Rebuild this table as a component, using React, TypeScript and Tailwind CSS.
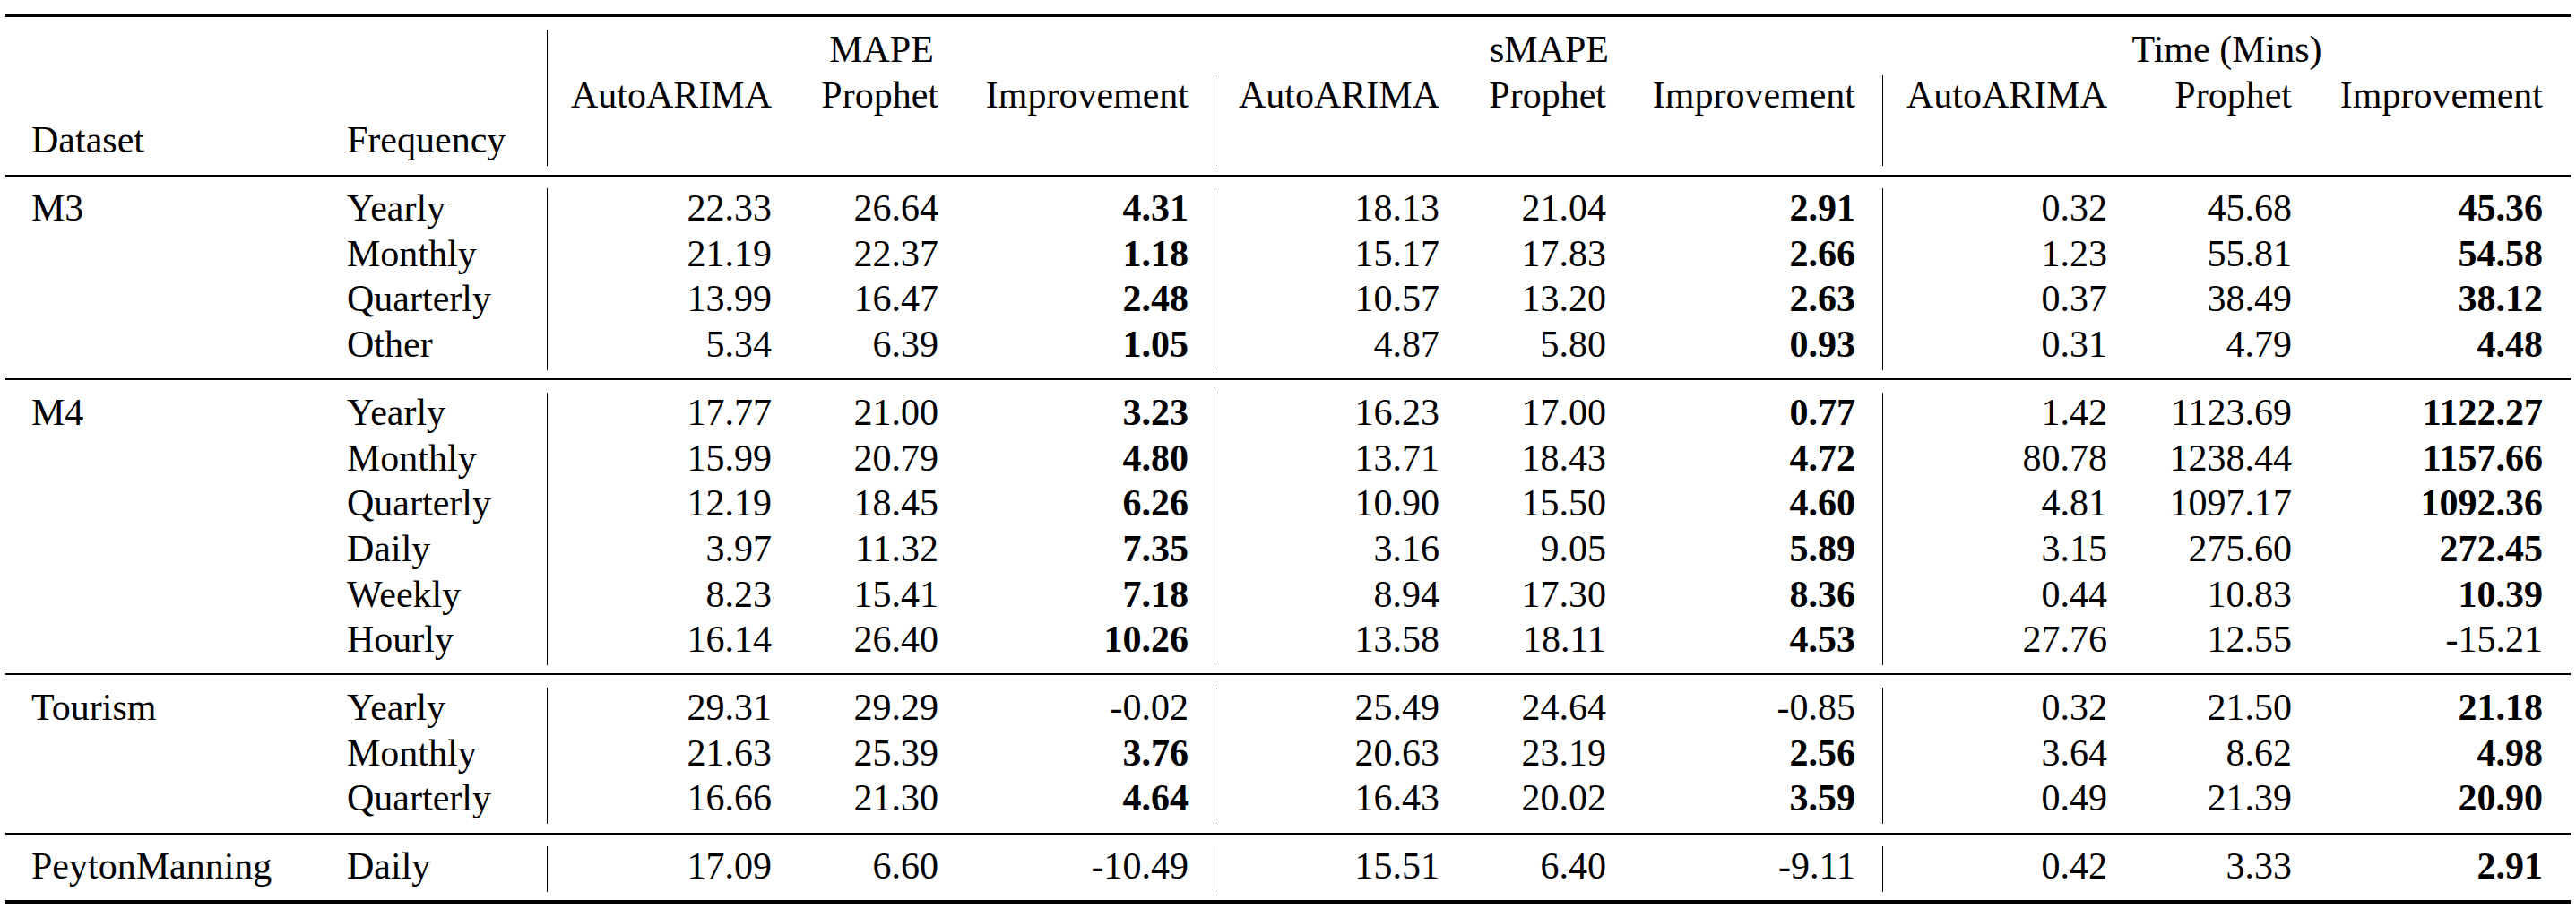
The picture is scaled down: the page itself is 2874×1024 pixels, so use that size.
import React from "react"

const COLS =
  "grid grid-cols-[353px_252px_278px_186px_281px_278px_186px_281px_278px_206px_283px]"

// "*" in front of a value = bold (best result)
const GROUPS: { name: string; rows: string[][] }[] = [
  {
    name: "M3",
    rows: [
      ["Yearly", "22.33", "26.64", "*4.31", "18.13", "21.04", "*2.91", "0.32", "45.68", "*45.36"],
      ["Monthly", "21.19", "22.37", "*1.18", "15.17", "17.83", "*2.66", "1.23", "55.81", "*54.58"],
      ["Quarterly", "13.99", "16.47", "*2.48", "10.57", "13.20", "*2.63", "0.37", "38.49", "*38.12"],
      ["Other", "5.34", "6.39", "*1.05", "4.87", "5.80", "*0.93", "0.31", "4.79", "*4.48"],
    ],
  },
  {
    name: "M4",
    rows: [
      ["Yearly", "17.77", "21.00", "*3.23", "16.23", "17.00", "*0.77", "1.42", "1123.69", "*1122.27"],
      ["Monthly", "15.99", "20.79", "*4.80", "13.71", "18.43", "*4.72", "80.78", "1238.44", "*1157.66"],
      ["Quarterly", "12.19", "18.45", "*6.26", "10.90", "15.50", "*4.60", "4.81", "1097.17", "*1092.36"],
      ["Daily", "3.97", "11.32", "*7.35", "3.16", "9.05", "*5.89", "3.15", "275.60", "*272.45"],
      ["Weekly", "8.23", "15.41", "*7.18", "8.94", "17.30", "*8.36", "0.44", "10.83", "*10.39"],
      ["Hourly", "16.14", "26.40", "*10.26", "13.58", "18.11", "*4.53", "27.76", "12.55", "-15.21"],
    ],
  },
  {
    name: "Tourism",
    rows: [
      ["Yearly", "29.31", "29.29", "-0.02", "25.49", "24.64", "-0.85", "0.32", "21.50", "*21.18"],
      ["Monthly", "21.63", "25.39", "*3.76", "20.63", "23.19", "*2.56", "3.64", "8.62", "*4.98"],
      ["Quarterly", "16.66", "21.30", "*4.64", "16.43", "20.02", "*3.59", "0.49", "21.39", "*20.90"],
    ],
  },
  {
    name: "PeytonManning",
    rows: [["Daily", "17.09", "6.60", "-10.49", "15.51", "6.40", "-9.11", "0.42", "3.33", "*2.91"]],
  },
]

const SUBHEADS = ["AutoARIMA", "Prophet", "Improvement"]

// right padding per numeric column; the Improvement columns carry the vertical rule
const NUM_CELL = [
  "pr-[28px]",
  "pr-[28px]",
  "pr-[29px] border-r border-black",
  "pr-[28px]",
  "pr-[28px]",
  "pr-[30px] border-r border-black",
  "pr-[28px]",
  "pr-[28px]",
  "pr-[31px]",
]

function Rule({ className }: { className: string }) {
  return <div className={`w-[2862px] bg-black ${className}`} />
}

export default function App() {
  return (
    <div className="bg-white text-black pt-[16px] pl-[6px] w-[2874px] h-[1024px] [font-family:'Liberation_Serif','Times_New_Roman',serif] text-[42px] leading-[45.7px]">
      <Rule className="h-[3px]" />

      {/* header */}
      <div className="pt-[14px] pb-[9.5px]">
        <div className={`${COLS} h-[50.7px]`}>
          <div />
          <div className="border-r border-black" />
          <div className="col-span-3 text-center">MAPE</div>
          <div className="col-span-3 text-center">sMAPE</div>
          <div className="col-span-3 text-center">Time (Mins)</div>
        </div>
        <div className={`${COLS} h-[50.7px]`}>
          <div />
          <div className="border-r border-black" />
          {[0, 1, 2, 3, 4, 5, 6, 7, 8].map((i) => (
            <div key={i} className={`text-right ${NUM_CELL[i]}`}>
              {SUBHEADS[i % 3]}
            </div>
          ))}
        </div>
        <div className={`${COLS} h-[50.7px]`}>
          <div className="pl-[29px]">Dataset</div>
          <div className="pl-[28px] border-r border-black">Frequency</div>
          {[0, 1, 2, 3, 4, 5, 6, 7, 8].map((i) => (
            <div key={i} className={NUM_CELL[i]} />
          ))}
        </div>
      </div>

      {GROUPS.map((g) => (
        <div key={g.name}>
          <Rule className="h-[2px]" />
          <div className="pt-[13.5px] pb-[9.5px]">
            {g.rows.map((r, ri) => (
              <div key={ri} className={`${COLS} h-[50.7px]`}>
                <div className="pl-[29px] whitespace-nowrap">{ri === 0 ? g.name : ""}</div>
                <div className="pl-[28px] border-r border-black">{r[0]}</div>
                {r.slice(1).map((v, i) => {
                  const bold = v.startsWith("*")
                  return (
                    <div key={i} className={`text-right ${NUM_CELL[i]} ${bold ? "font-bold" : ""}`}>
                      {bold ? v.slice(1) : v}
                    </div>
                  )
                })}
              </div>
            ))}
          </div>
        </div>
      ))}

      <Rule className="h-[3.5px]" />
    </div>
  )
}
